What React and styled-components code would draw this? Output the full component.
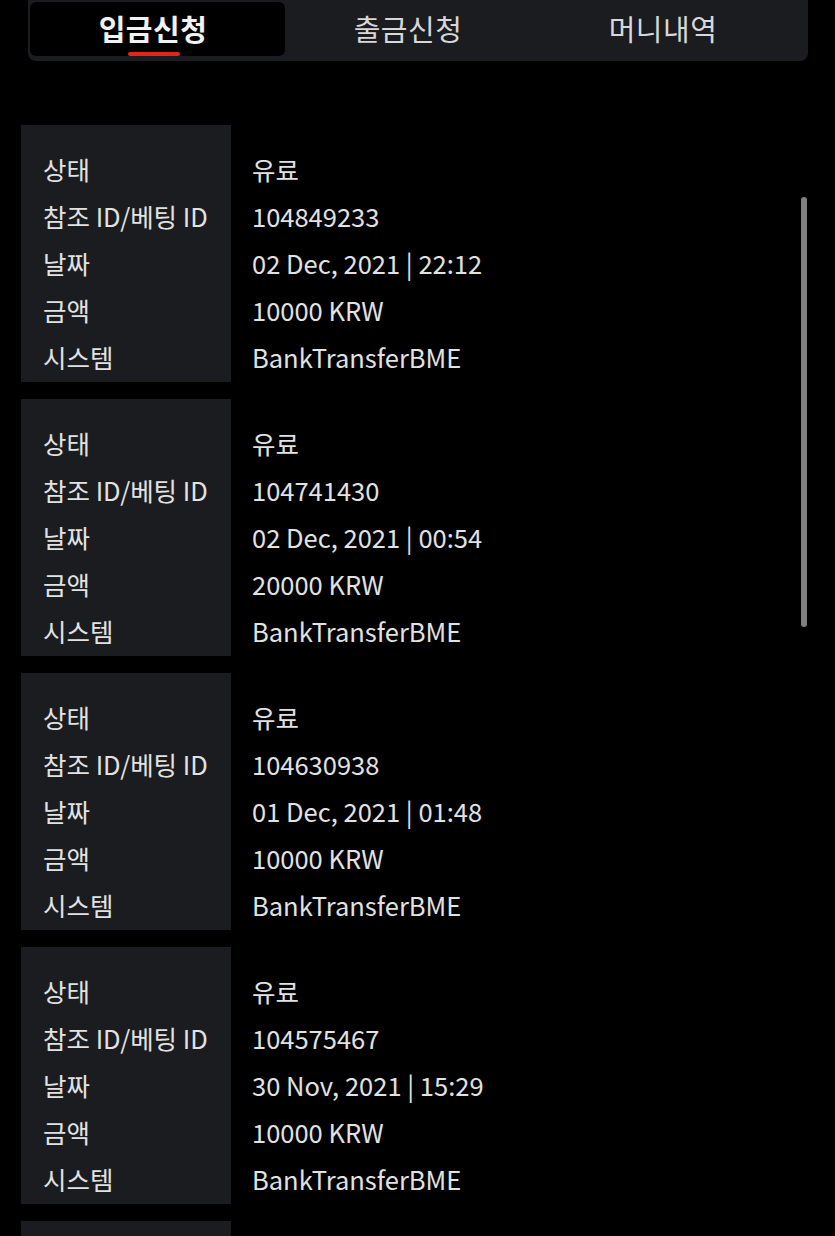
import React from 'react'
import styled, { createGlobalStyle } from 'styled-components'

const GlobalStyle = createGlobalStyle`
  html, body {
    margin: 0;
    padding: 0;
    background: #000;
  }
  body {
    font-family: "Noto Sans CJK KR", "Noto Sans", sans-serif;
    color: #e6e6e6;
    overflow: hidden;
  }
`

const Page = styled.div`
  position: relative;
  width: 835px;
  height: 1236px;
  overflow: hidden;
  background: #000;
`

const TabBar = styled.div`
  display: flex;
  margin: 0 27px 0 28px;
  padding: 2px 2px 5px 2px;
  height: 54px;
  background: #1b1c20;
  border-radius: 0 0 8px 8px;
`

const Tab = styled.div`
  position: relative;
  width: 255px;
  display: flex;
  align-items: center;
  justify-content: center;
  border-radius: 6px;
  background: ${props => props.active ? '#000' : 'transparent'};
  font-size: 29px;
  font-weight: ${props => props.active ? 700 : 400};
  color: ${props => props.active ? '#f2f2f2' : '#d8d8d8'};
  letter-spacing: 0.5px;
  padding: 0 9px 3px 0;
  box-sizing: border-box;
`

const Underline = styled.span`
  position: absolute;
  left: 98px;
  bottom: 0;
  width: 52px;
  height: 4px;
  border-radius: 2px;
  background: #e2261c;
`

const List = styled.div`
  display: flex;
  flex-direction: column;
  gap: 17px;
  padding: 64px 0 0 21px;
`

const Card = styled.div`
  display: flex;
  height: 257px;
`

const Column = styled.div`
  display: flex;
  flex-direction: column;
  padding-top: 20px;
  box-sizing: border-box;
  width: ${props => props.label ? '210px' : 'auto'};
  padding-left: ${props => props.label ? '22px' : '21px'};
  background: ${props => props.label ? '#1b1c20' : 'transparent'};
`

const Cell = styled.div`
  height: 47px;
  line-height: 47px;
  font-size: 25.5px;
  white-space: nowrap;
  color: #e2e2e2;
`

const Scrollbar = styled.div`
  position: absolute;
  left: 801px;
  top: 197px;
  width: 6px;
  height: 430px;
  border-radius: 3px;
  background: #808080;
`

const labels = ['상태', '참조 ID/베팅 ID', '날짜', '금액', '시스템']

const records = [
  ['유료', '104849233', '02 Dec, 2021 | 22:12', '10000 KRW', 'BankTransferBME'],
  ['유료', '104741430', '02 Dec, 2021 | 00:54', '20000 KRW', 'BankTransferBME'],
  ['유료', '104630938', '01 Dec, 2021 | 01:48', '10000 KRW', 'BankTransferBME'],
  ['유료', '104575467', '30 Nov, 2021 | 15:29', '10000 KRW', 'BankTransferBME'],
]

export default function App() {
  return (
    <Page>
      <GlobalStyle />
      <TabBar>
        <Tab active>
          입금신청
          <Underline />
        </Tab>
        <Tab>출금신청</Tab>
        <Tab>머니내역</Tab>
      </TabBar>
      <List>
        {records.map((rec, i) => (
          <Card key={i}>
            <Column label>
              {labels.map(l => <Cell key={l}>{l}</Cell>)}
            </Column>
            <Column>
              {rec.map((v, j) => <Cell key={j}>{v}</Cell>)}
            </Column>
          </Card>
        ))}
        {/* next record peeks in below the fold */}
        <Card>
          <Column label />
        </Card>
      </List>
      <Scrollbar />
    </Page>
  )
}
